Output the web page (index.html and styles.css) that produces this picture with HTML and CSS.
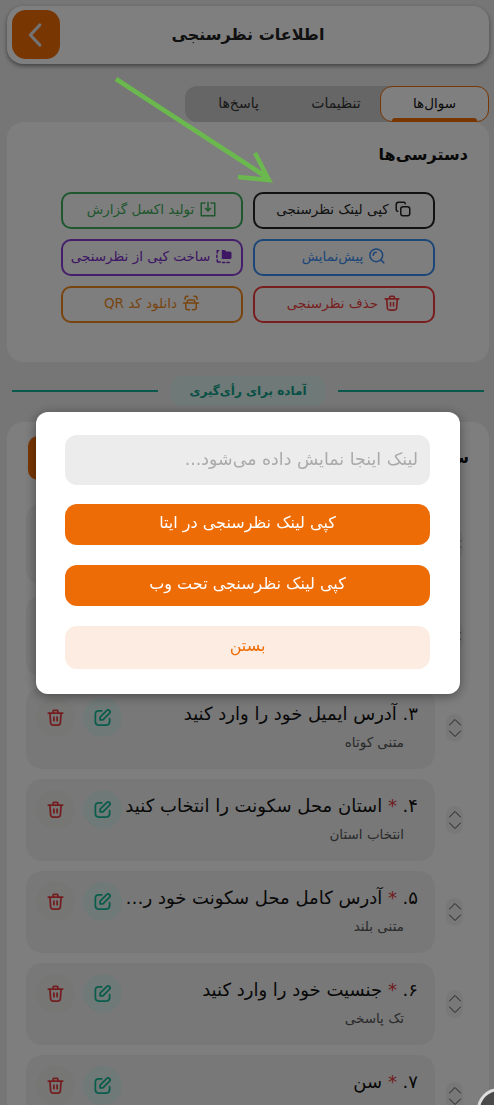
FILE: index.html
```html
<!DOCTYPE html>
<html lang="fa" dir="rtl">
<head>
<meta charset="utf-8">
<title>اطلاعات نظرسنجی</title>
<link rel="stylesheet" href="styles.css">
</head>
<body>
<svg width="0" height="0" class="defs">
<symbol id="trash" viewBox="0 0 24 24"><path d="M3 6.500h18M9 6V4a1 1 0 0 1 1-1h4a1 1 0 0 1 1 1v2M5 7l.8 11.500A3 3 0 0 0 9 21.500h6a3 3 0 0 0 3.200-3L19 7M10 11.500v4.500M14 11.500v4.500" fill="none" stroke="currentColor" stroke-width="2.200" stroke-linecap="round" stroke-linejoin="round"/></symbol>
<symbol id="edit" viewBox="0 0 24 24"><path d="M11 3.500H7a4 4 0 0 0-4 4v10a4 4 0 0 0 4 4h10a4 4 0 0 0 4-4v-4M9 15v-3.500L17.500 3a2 2 0 0 1 3 0l.5.500a2 2 0 0 1 0 3L12.500 15z" fill="none" stroke="currentColor" stroke-width="2.200" stroke-linecap="round" stroke-linejoin="round"/></symbol>
<symbol id="updown" viewBox="0 0 14 24"><path d="M1.500 9 7 3.500 12.500 9M1.500 15 7 20.500 12.500 15" fill="none" stroke="currentColor" stroke-width="1" stroke-linecap="round" stroke-linejoin="round"/></symbol>
</svg>
<div class="page">
  <header class="topbar">
    <button class="back"><svg viewBox="0 0 24 24" width="30" height="30"><path d="M15 4 7.500 12 15 20" fill="none" stroke="#e6e6e6" stroke-width="2.600" stroke-linecap="round" stroke-linejoin="round"/></svg></button>
    <h1>اطلاعات نظرسنجی</h1>
  </header>
  <nav class="tabs">
    <div class="tab active">سوال‌ها</div>
    <div class="tab settings">تنظیمات</div>
    <div class="tab">پاسخ‌ها</div>
  </nav>
  <section class="panel access">
    <h2>دسترسی‌ها</h2>
    <div class="grid">
      <button class="act dark"><svg viewBox="0 0 24 24"><rect x="9" y="9" width="12" height="12" rx="3" fill="none" stroke="currentColor" stroke-width="2"/><path d="M5 15a2 2 0 0 1-2-2V6a3 3 0 0 1 3-3h7a2 2 0 0 1 2 2" fill="none" stroke="currentColor" stroke-width="2" stroke-linecap="round"/></svg>کپی لینک نظرسنجی</button>
      <button class="act green"><svg viewBox="0 0 24 24"><path d="M8 4H3v17h18V4h-5M12 3v11M8.500 11l3.500 3.500 3.500-3.500" fill="none" stroke="currentColor" stroke-width="2" stroke-linejoin="round" stroke-linecap="round"/></svg>تولید اکسل گزارش</button>
      <button class="act blue"><svg viewBox="0 0 24 24"><circle cx="11" cy="11" r="8.500" fill="none" stroke="currentColor" stroke-width="2"/><path d="M7 11a4 4 0 0 1 4-4M17.500 17.500 21 21" fill="none" stroke="currentColor" stroke-width="2.200" stroke-linecap="round"/></svg>پیش‌نمایش</button>
      <button class="act purple"><svg viewBox="0 0 24 24"><path d="M9 4h4l2 2h5a2 2 0 0 1 2 2v6a2 2 0 0 1-2 2H9z" fill="currentColor"/><path d="M5 5H3v3M2.500 11v3M3 17v2a1 1 0 0 0 1 1h3M10 20.500h3M16 20.500h3" fill="none" stroke="currentColor" stroke-width="2" stroke-linecap="round"/></svg>ساخت کپی از نظرسنجی</button>
      <button class="act red"><svg><use href="#trash"/></svg>حذف نظرسنجی</button>
      <button class="act orange"><svg viewBox="0 0 24 24"><path d="M8 3H7a3 3 0 0 0-3 3v1M16 3h1a3 3 0 0 1 3 3v1M7 12v-2a2 2 0 0 1 2-2h6a2 2 0 0 1 2 2v2M2 12h20M5 12v6a3 3 0 0 0 3 3h2M19 12v6a3 3 0 0 1-3 3h-2" fill="none" stroke="currentColor" stroke-width="2" stroke-linecap="round"/></svg>دانلود کد QR</button>
    </div>
  </section>
  <div class="divider"><span class="line"></span><span class="pill">آماده برای رأی‌گیری</span><span class="line"></span></div>
  <section class="panel questions">
    <div class="qhead"><h2>سوالات</h2><span class="add"></span></div>
    <div class="row"><span class="mover"><svg><use href="#updown"/></svg></span><article class="card"><div class="qtext"><p class="qt">۱. نام خود را وارد کنید</p><p class="qs">متنی کوتاه</p></div><span class="ibtn teal"><svg><use href="#edit"/></svg></span><span class="ibtn rose"><svg><use href="#trash"/></svg></span></article></div>
    <div class="row"><span class="mover"><svg><use href="#updown"/></svg></span><article class="card"><div class="qtext"><p class="qt">۲. شماره تماس خود را وارد کنید</p><p class="qs">متنی کوتاه</p></div><span class="ibtn teal"><svg><use href="#edit"/></svg></span><span class="ibtn rose"><svg><use href="#trash"/></svg></span></article></div>
    <div class="row"><span class="mover"><svg><use href="#updown"/></svg></span><article class="card"><div class="qtext"><p class="qt">۳. آدرس ایمیل خود را وارد کنید</p><p class="qs">متنی کوتاه</p></div><span class="ibtn teal"><svg><use href="#edit"/></svg></span><span class="ibtn rose"><svg><use href="#trash"/></svg></span></article></div>
    <div class="row"><span class="mover"><svg><use href="#updown"/></svg></span><article class="card"><div class="qtext"><p class="qt">۴. <b>*</b> استان محل سکونت را انتخاب کنید</p><p class="qs">انتخاب استان</p></div><span class="ibtn teal"><svg><use href="#edit"/></svg></span><span class="ibtn rose"><svg><use href="#trash"/></svg></span></article></div>
    <div class="row"><span class="mover"><svg><use href="#updown"/></svg></span><article class="card"><div class="qtext"><p class="qt">۵. <b>*</b> آدرس کامل محل سکونت خود را وارد کنید</p><p class="qs">متنی بلند</p></div><span class="ibtn teal"><svg><use href="#edit"/></svg></span><span class="ibtn rose"><svg><use href="#trash"/></svg></span></article></div>
    <div class="row"><span class="mover"><svg><use href="#updown"/></svg></span><article class="card"><div class="qtext"><p class="qt">۶. <b>*</b> جنسیت خود را وارد کنید</p><p class="qs">تک پاسخی</p></div><span class="ibtn teal"><svg><use href="#edit"/></svg></span><span class="ibtn rose"><svg><use href="#trash"/></svg></span></article></div>
    <div class="row"><span class="mover"><svg><use href="#updown"/></svg></span><article class="card"><div class="qtext"><p class="qt">۷. <b>*</b> سن</p></div><span class="ibtn teal"><svg><use href="#edit"/></svg></span><span class="ibtn rose"><svg><use href="#trash"/></svg></span></article></div>
  </section>
</div>
<div class="overlay">
  <div class="modal">
    <div class="field">لینک اینجا نمایش داده می‌شود...</div>
    <button class="mbtn solid">کپی لینک نظرسنجی در ایتا</button>
    <button class="mbtn solid">کپی لینک نظرسنجی تحت وب</button>
    <button class="mbtn soft">بستن</button>
  </div>
</div>
<span class="fab"></span>
<svg class="arrow" viewBox="0 0 494 200" width="494" height="200"><path d="M116 79 268 178M255 153 269 180 238 177" fill="none" stroke="#6bb84e" stroke-width="4.500"/></svg>
</body>
</html>
```
FILE: styles.css
```css
* { box-sizing: border-box; }
html, body { margin: 0; padding: 0; height: 1105px; overflow: hidden; }
body { background: #ececec; font-family: "DejaVu Sans", "Noto Sans", sans-serif; color: #111; position: relative; width: 494px; }
.defs { position: absolute; }
.page { padding: 6px 5px 0 7px; display: flex; flex-direction: column; }
button { font-family: inherit; margin: 0; }
p, h1, h2 { margin: 0; }

.topbar { height: 58px; background: #fff; border-radius: 16px; box-shadow: 0 2px 4px rgba(0,0,0,.45); display: flex; align-items: center; justify-content: center; position: relative; }
.topbar h1 { font-size: 16px; font-weight: 700; color: #222; line-height: 54px; }
.back { position: absolute; left: 5px; top: 4px; width: 48px; height: 49px; border: 0; border-radius: 14px; background: #f06c05; display: flex; align-items: center; justify-content: center; padding: 0; }

.tabs { margin-top: 22px; width: 304px; height: 36px; background: #ccc; border-radius: 12px; display: flex; }
.tab { flex: 1; display: flex; align-items: center; justify-content: center; font-size: 14px; color: #333; padding-bottom: 2px; }
.tab.settings { flex: 0 0 88px; }
.tab.active { flex: 0 0 109px; background: #fff; border: 1px solid #f06c05; border-radius: 12px; color: #111; position: relative; font-size: 13.500px; }
.tab.active::after { content: ""; position: absolute; left: 11px; right: 11px; bottom: -1px; height: 4px; background: #f06c05; border-radius: 3px 3px 0 0; }

.panel { background: #fcfcfc; border-radius: 16px; }
.access { height: 240px; padding: 20px 21px 0; }
.access h2 { font-size: 16px; font-weight: 700; color: #111; line-height: 26px; }
.grid { margin-top: 24px; display: grid; grid-template-columns: 182px 182px; justify-content: center; gap: 10px; }
.act { height: 37px; background: transparent; border: 2px solid; border-radius: 10px; display: flex; align-items: center; justify-content: center; gap: 5px; font-size: 13.500px; padding: 0 0 3px; }
.act svg { width: 18px; height: 18px; flex: none; }
.dark { color: #222; border-color: #222; }
.green { color: #3fae5c; border-color: #3fae5c; }
.blue { color: #3a8cf0; border-color: #3a8cf0; }
.purple { color: #7a2cc8; border-color: #8a3cd8; }
.red { color: #f03c3c; border-color: #f03c3c; }
.orange { color: #f08a1e; border-color: #f08a1e; }

.divider { margin: 14px 0 16px; height: 30px; padding: 0 5px; display: flex; align-items: center; gap: 13px; }
.line { flex: 1; height: 2px; background: #12b096; }
.pill { width: 154px; height: 30px; border-radius: 10px; background: #dff2ee; color: #10a08a; font-size: 12px; font-weight: 700; display: flex; align-items: center; justify-content: center; }

.questions { padding: 14px 0 0 19px; }
.qhead { height: 67px; display: flex; justify-content: space-between; padding-right: 20px; padding-left: 2px; }
.qhead h2 { font-size: 16px; line-height: 44px; }
.add { width: 60px; height: 44px; background: #f06c05; border-radius: 10px; }
.row { display: flex; align-items: center; gap: 11px; height: 82px; margin-bottom: 10px; padding-right: 26px; }
.mover { width: 17px; height: 28px; border-radius: 9px; background: #f0f0f0; color: #444; display: flex; align-items: center; justify-content: center; flex: none; }
.mover svg { width: 14px; height: 24px; }
.card { flex: 1; height: 82px; background: #f0f0f0; border-radius: 16px; display: flex; align-items: flex-start; padding: 11px 17px 0 10px; gap: 8px; min-width: 0; }
.qtext { flex: 1; min-width: 0; margin-left: -6px; padding-top: 1px; }
.qt { font-size: 18px; line-height: 30px; color: #111; white-space: nowrap; overflow: hidden; text-overflow: ellipsis; }
.qt b { color: #e0383c; font-weight: 400; }
.qs { font-size: 13.500px; line-height: 20px; color: #555; margin-top: 3px; padding-right: 14px; }
.ibtn { width: 39px; height: 39px; border-radius: 50%; flex: none; display: flex; align-items: center; justify-content: center; }
.ibtn svg { width: 19px; height: 19px; }
.teal { background: #dff2ee; color: #12b896; }
.rose { background: #ececea; color: #e83a3e; }

.fab { position: absolute; left: 477px; top: 1088px; width: 44px; height: 44px; border-radius: 50%; border: 3px solid #ddd; background: #4a4a4a; }

.overlay { position: fixed; inset: 0; background: rgba(0,0,0,.5); display: flex; align-items: center; justify-content: center; padding-left: 2px; }
.modal { width: 424px; height: 282px; background: #fff; border-radius: 12px; padding: 23px 30px 0 29px; display: flex; flex-direction: column; box-shadow: 0 2px 12px rgba(0,0,0,.4); }
.field { height: 50px; border-radius: 12px; background: #ececec; color: #aaa; font-size: 17.400px; display: flex; align-items: center; padding: 0 12px 2px; margin-bottom: 19px; }
.mbtn { height: 41px; border: 0; border-radius: 12px; font-size: 16px; margin-bottom: 20px; padding: 0 0 3px; }
.solid { background: #ee6c06; color: #fff; }
.soft { background: #fcece1; color: #ee6c06; height: 43px; }
.arrow { position: absolute; left: 0; top: 0; pointer-events: none; }
```
